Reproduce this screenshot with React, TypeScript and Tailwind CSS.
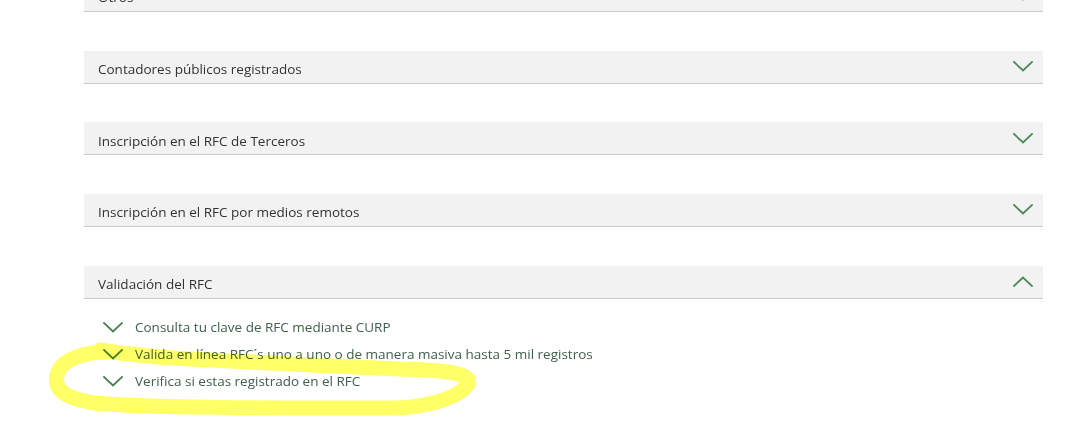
import React from 'react';

const font = { fontFamily: '"Open Sans", "Noto Sans", Arial, sans-serif' };

const Chevron = ({ up = false, className = '' }: { up?: boolean; className?: string }) => (
  <svg width="20" height="11" viewBox="0 0 20 11" className={className} fill="none">
    <path
      d={up ? 'M1 10 L10 1.5 L19 10' : 'M1 1 L10 9.5 L19 1'}
      stroke="currentColor"
      strokeWidth="1.8"
      strokeLinecap="square"
    />
  </svg>
);

const Header = ({ title, open = false }: { title: string; open?: boolean }) => (
  <div className="flex h-[33px] items-center justify-between border-b border-[#c9c9c9] bg-[#f2f2f2] pl-[14px] pr-[10px]">
    <span className="pt-[5px] text-[13.5px] text-[#333333]">{title}</span>
    <Chevron up={open} className="text-[#4b8a57]" />
  </div>
);

const links = [
  'Consulta tu clave de RFC mediante CURP',
  'Valida en línea RFC´s uno a uno o de manera masiva hasta 5 mil registros',
  'Verifica si estas registrado en el RFC',
];

export default function App() {
  return (
    <div className="relative h-[425px] w-[1069px] overflow-hidden bg-white" style={font}>
      <div className="ml-[84px] mt-[-21px] flex w-[959px] flex-col gap-[38.67px]">
        <Header title="Otros" />
        <Header title="Contadores públicos registrados" />
        <Header title="Inscripción en el RFC de Terceros" />
        <Header title="Inscripción en el RFC por medios remotos" />
        <div>
          <Header title="Validación del RFC" open />
          <ul className="mt-[18px] flex flex-col gap-[6px] pl-[19px]">
            {links.map((l) => (
              <li key={l} className="flex h-[21px] items-center gap-[12px]">
                <Chevron className="text-[#4b7d58]" />
                <span className="text-[13.5px] text-[#41614a]">{l}</span>
              </li>
            ))}
          </ul>
        </div>
      </div>

      {/* hand-drawn highlight */}
      <svg
        className="pointer-events-none absolute left-0 top-0 mix-blend-multiply"
        width="1069"
        height="425"
        viewBox="0 0 1069 425"
        fill="none"
      >
        <path
          d="M108 352 C86 352 64 358 58 372 C52 388 62 398 95 403 C150 408 260 408 400 408 C440 405 462 394 468 384 C472 374 450 370 400 369 C330 366 250 362 190 359 C150 357 125 354 100 350"
          stroke="#ffff66"
          strokeWidth="15"
          strokeLinecap="round"
          strokeLinejoin="round"
        />
      </svg>
    </div>
  );
}
